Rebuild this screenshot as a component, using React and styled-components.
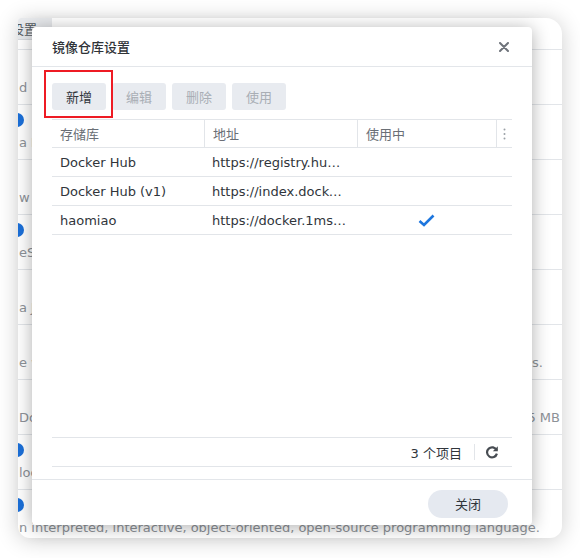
import React from "react";
import styled, { createGlobalStyle } from "styled-components";

const Global = createGlobalStyle`
  html, body { margin: 0; padding: 0; background: #ffffff; }
  body {
    font-family: "DejaVu Sans", "Noto Sans CJK SC", sans-serif;
    -webkit-font-smoothing: antialiased;
  }
  * { box-sizing: border-box; }
`;

const Stage = styled.div`
  position: relative;
  width: 580px;
  height: 558px;
  padding: 18px 18px 20px 18px;
`;

const BgWindow = styled.div`
  width: 544px;
  height: 520px;
  background: #ffffff;
  border-radius: 3px 16px 12px 12px;
  box-shadow: 0 2px 22px rgba(0, 0, 0, 0.2);
  overflow: hidden;
  display: flex;
  flex-direction: column;
`;

const BgTop = styled.div`
  height: 31px;
  flex: none;
`;

const Tab = styled.div`
  width: 34px;
  height: 22px;
  background: #e7e9ec;
  border-bottom: 1px solid #d6d9de;
  display: flex;
  justify-content: flex-end;
  align-items: center;
  padding-right: 15px;
  font-size: 13px;
  color: #555a60;
  white-space: nowrap;
  overflow: hidden;
`;

const BgRow = styled.div`
  height: ${(p) => (p.$last ? "auto" : "55px")};
  flex: ${(p) => (p.$last ? "1" : "none")};
  border-top: 1px solid #e2e5e9;
  padding-top: 8px;
  display: flex;
  flex-direction: column;
`;

const DotSlot = styled.div`
  height: 14px;
  display: flex;
  align-items: center;
`;

const Dot = styled.div`
  width: 14px;
  height: 14px;
  border-radius: 50%;
  background: #1b6fd8;
  margin-left: -8px;
`;

const BgLine = styled.div`
  margin-top: 7px;
  height: 18px;
  line-height: 18px;
  font-size: 13px;
  color: #8d9298;
  display: flex;
  justify-content: space-between;
  white-space: nowrap;
  overflow: hidden;
`;

const BgLeft = styled.span`
  padding-left: 1px;
`;

const BgRight = styled.span`
  padding-right: ${(p) => p.$pad || 2}px;
`;

const Dialog = styled.div`
  position: absolute;
  left: 32px;
  top: 27px;
  width: 500px;
  height: 498px;
  background: #ffffff;
  border-radius: 4px;
  box-shadow: 0 2px 18px rgba(0, 0, 0, 0.32);
  display: flex;
  flex-direction: column;
`;

const Header = styled.div`
  height: 40px;
  flex: none;
  border-bottom: 1px solid #e3e6ea;
  display: flex;
  align-items: center;
  justify-content: space-between;
  padding: 0 23px 0 20px;
`;

const Title = styled.div`
  font-size: 13px;
  font-weight: 500;
  color: #2f3338;
`;

const CloseBtn = styled.button`
  border: 0;
  background: none;
  padding: 0;
  width: 10px;
  height: 10px;
  display: flex;
  cursor: pointer;
`;

const Body = styled.div`
  flex: 1;
  display: flex;
  flex-direction: column;
  padding: 16px 20px 12px 20px;
`;

const Toolbar = styled.div`
  display: flex;
  gap: 6px;
  margin-bottom: 9px;
`;

const Marked = styled.div`
  position: relative;
  display: flex;
`;

const RedBox = styled.div`
  position: absolute;
  left: -8px;
  top: -13px;
  width: 69px;
  height: 48px;
  border: 2px solid #ee1b24;
  pointer-events: none;
`;

const ToolButton = styled.button`
  width: 54px;
  height: 27px;
  border: 0;
  border-radius: 3px;
  background: #e8ebf0;
  font-family: inherit;
  font-size: 13px;
  color: ${(p) => (p.disabled ? "#a9aeb5" : "#30353b")};
  padding: 0;
`;

const Table = styled.div`
  flex: 1;
  display: flex;
  flex-direction: column;
`;

const HeadRow = styled.div`
  display: grid;
  grid-template-columns: 152px 153px 139px 16px;
  height: 29px;
  border-top: 1px solid #e2e5e9;
  border-bottom: 1px solid #e2e5e9;
`;

const HeadCell = styled.div`
  display: flex;
  align-items: center;
  font-size: 13px;
  color: #6a6f76;
  border-left: ${(p) => (p.$first ? "none" : "1px solid #e2e5e9")};
  justify-content: ${(p) => (p.$center ? "center" : "flex-start")};
  padding: ${(p) => (p.$center ? "0" : "0 0 0 8px")};
`;

const Row = styled.div`
  display: grid;
  grid-template-columns: 152px 153px 139px 16px;
  height: 29px;
  border-bottom: 1px solid #e2e5e9;
`;

const Cell = styled.div`
  display: flex;
  align-items: center;
  justify-content: ${(p) => (p.$center ? "center" : "flex-start")};
  padding: ${(p) => (p.$center ? "0" : "0 10px 0 8px")};
  font-size: 13px;
  color: #30353b;
  min-width: 0;
`;

const Ellipsis = styled.span`
  overflow: hidden;
  text-overflow: ellipsis;
  white-space: nowrap;
  display: block;
  width: 100%;
`;

const Spacer = styled.div`
  flex: 1;
`;

const Pager = styled.div`
  height: 30px;
  border-top: 1px solid #e2e5e9;
  border-bottom: 1px solid #e2e5e9;
  display: flex;
  align-items: center;
  justify-content: flex-end;
  padding-right: 13px;
`;

const Count = styled.span`
  font-size: 13px;
  color: #30353b;
`;

const Divider = styled.div`
  width: 1px;
  height: 16px;
  background: #e2e5e9;
  margin: 0 10px 0 12px;
`;

const Footer = styled.div`
  height: 46px;
  flex: none;
  border-top: 1px solid #e3e6ea;
  display: flex;
  align-items: center;
  justify-content: flex-end;
  padding: 2px 24px 0 0;
`;

const PillButton = styled.button`
  width: 80px;
  height: 28px;
  border: 0;
  border-radius: 14px;
  background: #e5e9f0;
  font-family: inherit;
  font-size: 13px;
  color: #30353b;
  padding: 0;
`;

const Check = () => (
  <svg width="17" height="13" viewBox="0 0 17 13">
    <path d="M1.5 7 L6 11 L15.5 1.5" fill="none" stroke="#1d76de" strokeWidth="2.6" strokeLinejoin="miter" />
  </svg>
);

const XIcon = () => (
  <svg width="10" height="10" viewBox="0 0 10 10">
    <path d="M1 1 L9 9 M9 1 L1 9" stroke="#6e737a" strokeWidth="2" strokeLinecap="round" />
  </svg>
);

const Kebab = () => (
  <svg width="3" height="12" viewBox="0 0 3 12">
    <circle cx="1.5" cy="1.5" r="1" fill="#9aa0a6" />
    <circle cx="1.5" cy="6" r="1" fill="#9aa0a6" />
    <circle cx="1.5" cy="10.5" r="1" fill="#9aa0a6" />
  </svg>
);

const Refresh = () => (
  <svg width="14" height="14" viewBox="0 0 14 14">
    <path d="M11.6 5.2 A5 5 0 1 0 11.9 8.6" fill="none" stroke="#474c52" strokeWidth="2.2" />
    <path d="M12.8 1.2 L12.8 6.2 L7.8 6.2 Z" fill="#474c52" />
  </svg>
);

const bgRows = [
  { dot: false, left: "d" },
  { dot: true, left: "a D" },
  { dot: false, left: "w" },
  { dot: true, left: "eS" },
  { dot: false, left: "a J" },
  { dot: false, left: "e w", right: "es.", pad: 19 },
  { dot: false, left: "Do", right: "5 MB", pad: 2 },
  { dot: true, left: "loc" },
  { dot: true, left: "n interpreted, interactive, object-oriented, open-source programming language.", last: true },
];

const registries = [
  { name: "Docker Hub", url: "https://registry.hub.docker.com", inUse: false },
  { name: "Docker Hub (v1)", url: "https://index.docker.io", inUse: false },
  { name: "haomiao", url: "https://docker.1ms.run", inUse: true },
];

export default function App() {
  return (
    <>
      <Global />
      <Stage>
        <BgWindow>
          <BgTop>
            <Tab>设置</Tab>
          </BgTop>
          {bgRows.map((r, i) => (
            <BgRow key={i} $last={r.last}>
              <DotSlot>{r.dot && <Dot />}</DotSlot>
              <BgLine>
                <BgLeft>{r.left}</BgLeft>
                {r.right && <BgRight $pad={r.pad}>{r.right}</BgRight>}
              </BgLine>
            </BgRow>
          ))}
        </BgWindow>

        <Dialog>
          <Header>
            <Title>镜像仓库设置</Title>
            <CloseBtn aria-label="关闭">
              <XIcon />
            </CloseBtn>
          </Header>
          <Body>
            <Toolbar>
              <Marked>
                <ToolButton>新增</ToolButton>
                <RedBox />
              </Marked>
              <ToolButton disabled>编辑</ToolButton>
              <ToolButton disabled>删除</ToolButton>
              <ToolButton disabled>使用</ToolButton>
            </Toolbar>
            <Table>
              <HeadRow>
                <HeadCell $first>存储库</HeadCell>
                <HeadCell>地址</HeadCell>
                <HeadCell>使用中</HeadCell>
                <HeadCell $center>
                  <Kebab />
                </HeadCell>
              </HeadRow>
              {registries.map((r) => (
                <Row key={r.name}>
                  <Cell>
                    <Ellipsis>{r.name}</Ellipsis>
                  </Cell>
                  <Cell>
                    <Ellipsis>{r.url}</Ellipsis>
                  </Cell>
                  <Cell $center>{r.inUse && <Check />}</Cell>
                  <Cell $center />
                </Row>
              ))}
              <Spacer />
              <Pager>
                <Count>3 个项目</Count>
                <Divider />
                <Refresh />
              </Pager>
            </Table>
          </Body>
          <Footer>
            <PillButton>关闭</PillButton>
          </Footer>
        </Dialog>
      </Stage>
    </>
  );
}
